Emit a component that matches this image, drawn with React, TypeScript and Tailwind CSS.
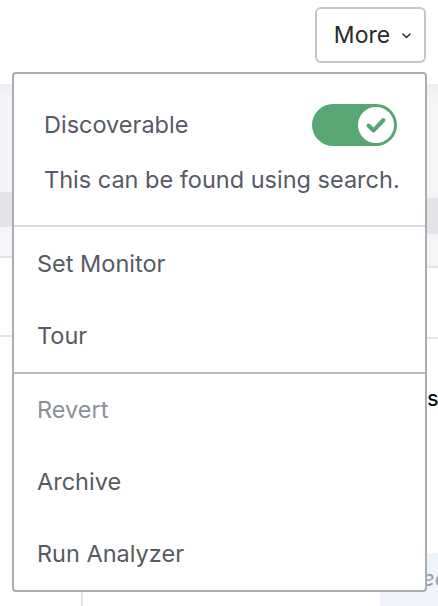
import { useState } from 'react';

const groups = [
    [
        { label: 'Set Monitor', disabled: false },
        { label: 'Tour', disabled: false },
    ],
    [
        { label: 'Revert', disabled: true },
        { label: 'Archive', disabled: false },
        { label: 'Run Analyzer', disabled: false },
    ],
];

function Toggle({ on }: { on: boolean }) {
    return (
        <div className={`w-[85px] h-[42px] rounded-full p-[3px] flex items-center ${on ? 'bg-[#58a674] justify-end' : 'bg-gray-300 justify-start'}`}>
            <div className="w-[36px] h-[36px] rounded-full bg-white flex items-center justify-center">
                <svg width="36" height="36" viewBox="0 0 36 36">
                    <path d="M10.5 18.5 L15.5 23.5 L25.5 13" fill="none" stroke="#58a674" strokeWidth="4" strokeLinecap="round" strokeLinejoin="round" />
                </svg>
            </div>
        </div>
    );
}

export default function App() {
    const [discoverable] = useState(true);

    return (
        <div className="relative w-[438px] h-[606px] overflow-hidden bg-white text-[#555a65]" style={{ fontFamily: 'Inter, "Open Sans", sans-serif' }}>
            {/* page behind the menu */}
            <div className="h-[84px] flex justify-end items-start pt-[7px] pr-[12px]">
                <button className="w-[111px] h-[56px] rounded-[6px] border-2 border-[#c4c6cb] flex items-center justify-center gap-[12px] text-[23px] text-[#2a2a2a] pl-[4px]">
                    <span>More</span>
                    <svg width="9" height="6" viewBox="0 0 9 6" className="mt-[2px]">
                        <path d="M1 1 L4.5 4.5 L8 1" fill="none" stroke="#333" strokeWidth="1.6" strokeLinecap="round" strokeLinejoin="round" />
                    </svg>
                </button>
            </div>
            <div className="flex">
                <div className="w-[219px] flex flex-col">
                    <div className="h-[108px] bg-gradient-to-b from-[#eceef1] to-[#f4f5f7] to-[12%]" />
                    <div className="h-[35px] bg-[#e3e4e7]" />
                    <div className="h-[31px] bg-[#f4f5f7] border-b-2 border-[#e3e4e7]" />
                    <div className="h-[79px] border-b-2 border-[#e3e4e7]" />
                    <div className="h-[255px] relative">
                        <div className="absolute left-[81px] top-[255px] w-[2px] h-[20px] bg-[#e5e6ea]" />
                    </div>
                </div>
                <div className="w-[219px] flex flex-col">
                    <div className="h-[114px] bg-gradient-to-b from-[#eceef1] to-[#f4f5f7] to-[12%]" />
                    <div className="h-[36px] bg-[#e3e4e7]" />
                    <div className="h-[34px] bg-[#f4f5f7] border-b-2 border-[#e3e4e7]" />
                    <div className="h-[71px] border-b-2 border-[#e3e4e7]" />
                    <div className="h-[70px] flex justify-end items-end">
                        <span className="text-[22px] text-black leading-none w-[11px] overflow-hidden">s</span>
                    </div>
                    <div className="flex-1 flex justify-end">
                        <div className="w-[58px] mt-[144px] h-[60px] rounded-l-[6px] bg-[#eff4fc] pt-[12px] pl-[42px] text-[22px] leading-[26px] italic text-[#9aa0a8] overflow-hidden whitespace-nowrap">
                            ec
                        </div>
                    </div>
                </div>
            </div>

            {/* dropdown menu */}
            <div className="absolute left-[12px] top-[72px] w-[415px] h-[520px] bg-white border-2 border-[#a9acb3] rounded-[4px] flex flex-col">
                <div className="h-[154px] px-[30px] pt-[30px] border-b-2 border-[#dcdde1] flex flex-col">
                    <div className="flex items-center justify-between mr-[-2px]">
                        <span className="text-[23.5px]">Discoverable</span>
                        <Toggle on={discoverable} />
                    </div>
                    <p className="text-[23.5px] mt-[16px] whitespace-nowrap">This can be found using search.</p>
                </div>
                {groups.map((group, gi) => (
                    <div key={gi} className={`flex flex-col ${gi === 0 ? 'pt-[1px] border-b-2 border-[#b8bbc1]' : 'flex-1'}`}>
                        {group.map((item) => (
                            <div key={item.label} className={`h-[72px] flex items-center pl-[23px] text-[23.5px] ${item.disabled ? 'text-[#8b9099]' : ''}`}>
                                {item.label}
                            </div>
                        ))}
                    </div>
                ))}
            </div>
        </div>
    );
}
